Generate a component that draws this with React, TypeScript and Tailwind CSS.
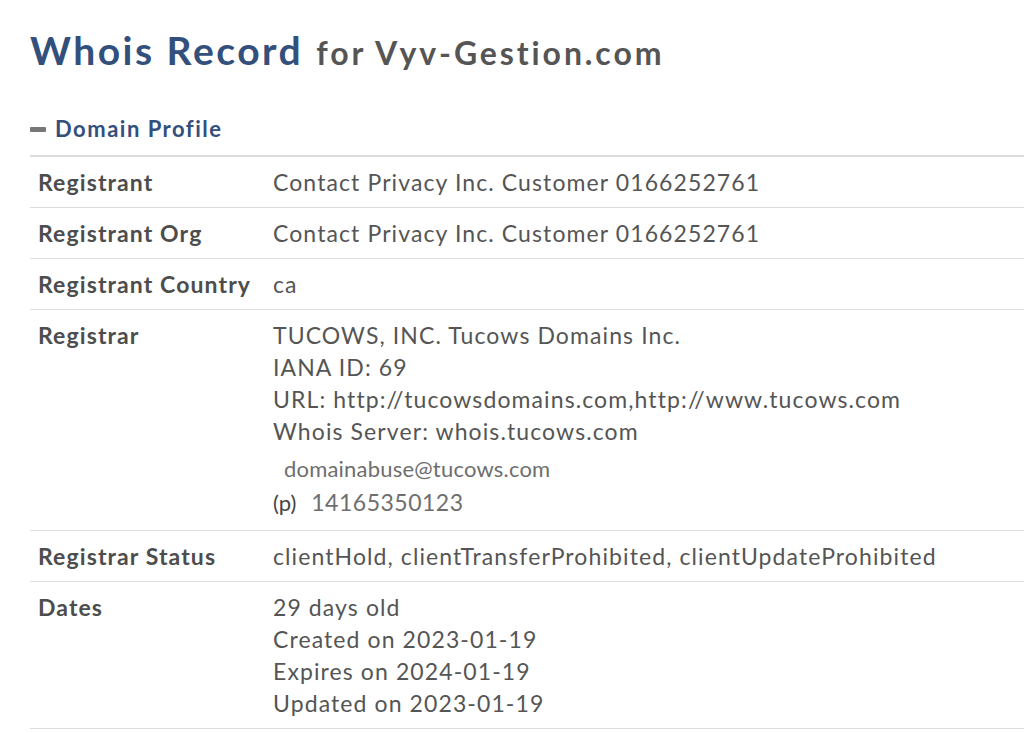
import React from 'react';

type Row = { label: string; lines: React.ReactNode[] };

const rows: Row[] = [
    { label: 'Registrant', lines: ['Contact Privacy Inc. Customer 0166252761'] },
    { label: 'Registrant Org', lines: ['Contact Privacy Inc. Customer 0166252761'] },
    { label: 'Registrant Country', lines: ['ca'] },
    {
        label: 'Registrar',
        lines: [
            'TUCOWS, INC. Tucows Domains Inc.',
            'IANA ID: 69',
            'URL: http://tucowsdomains.com,http://www.tucows.com',
            'Whois Server: whois.tucows.com',
        ],
    },
    { label: 'Registrar Status', lines: ['clientHold, clientTransferProhibited, clientUpdateProhibited'] },
    {
        label: 'Dates',
        lines: ['29 days old', 'Created on 2023-01-19', 'Expires on 2024-01-19', 'Updated on 2023-01-19'],
    },
];

const App: React.FC = () => {
    return (
        <div className="min-h-screen bg-white pl-[30px] pt-[24px] overflow-hidden font-['Lato','Liberation_Sans',sans-serif] [font-variant-ligatures:none]">
            {/* Title */}
            <h1 className="flex items-baseline whitespace-nowrap h-[52px]">
                <span className="text-[39px] leading-[52px] font-bold text-[#33507c] tracking-[2.5px]">Whois Record</span>
                <span className="text-[32px] leading-[52px] font-bold text-[#555555] ml-[13px] tracking-[2.9px]">for Vyv-Gestion.com</span>
            </h1>

            {/* Section header */}
            <div className="mt-[40px] flex items-center gap-[9px] h-[26px]">
                <span className="block w-[16px] h-[5px] bg-[#777777] rounded-[1px]" />
                <span className="text-[22px] leading-[26px] font-bold text-[#33507c] tracking-[1.5px]">Domain Profile</span>
            </div>

            {/* Table */}
            <div className="mt-[13px] border-t-2 border-[#dddddd]">
                {rows.map((row, i) => (
                    <div key={i} className="flex border-b border-[#dddddd] py-[9px] text-[23px] leading-[32px] tracking-[1.1px]">
                        <div className="w-[243px] shrink-0 pl-[8px] font-bold text-[#4d4d4d]">{row.label}</div>
                        <div className="text-[#555555] whitespace-nowrap">
                            {row.lines.map((l, j) => (
                                <div key={j}>{l}</div>
                            ))}
                            {row.label === 'Registrar' && (
                                <div className="tracking-normal pb-[2px]">
                                    <div className="pl-[11px] pt-[5px] text-[22px] leading-[34px] text-[#6e6e6e] tracking-[0.2px]">domainabuse@tucows.com</div>
                                    <div className="flex items-baseline leading-[32px]">
                                        <span className="text-[22px] text-[#444444]">(p)</span>
                                        <span className="ml-[15px] text-[23px] text-[#6e6e6e] tracking-[0.5px]">14165350123</span>
                                    </div>
                                </div>
                            )}
                        </div>
                    </div>
                ))}
            </div>
        </div>
    );
};

export default App;
